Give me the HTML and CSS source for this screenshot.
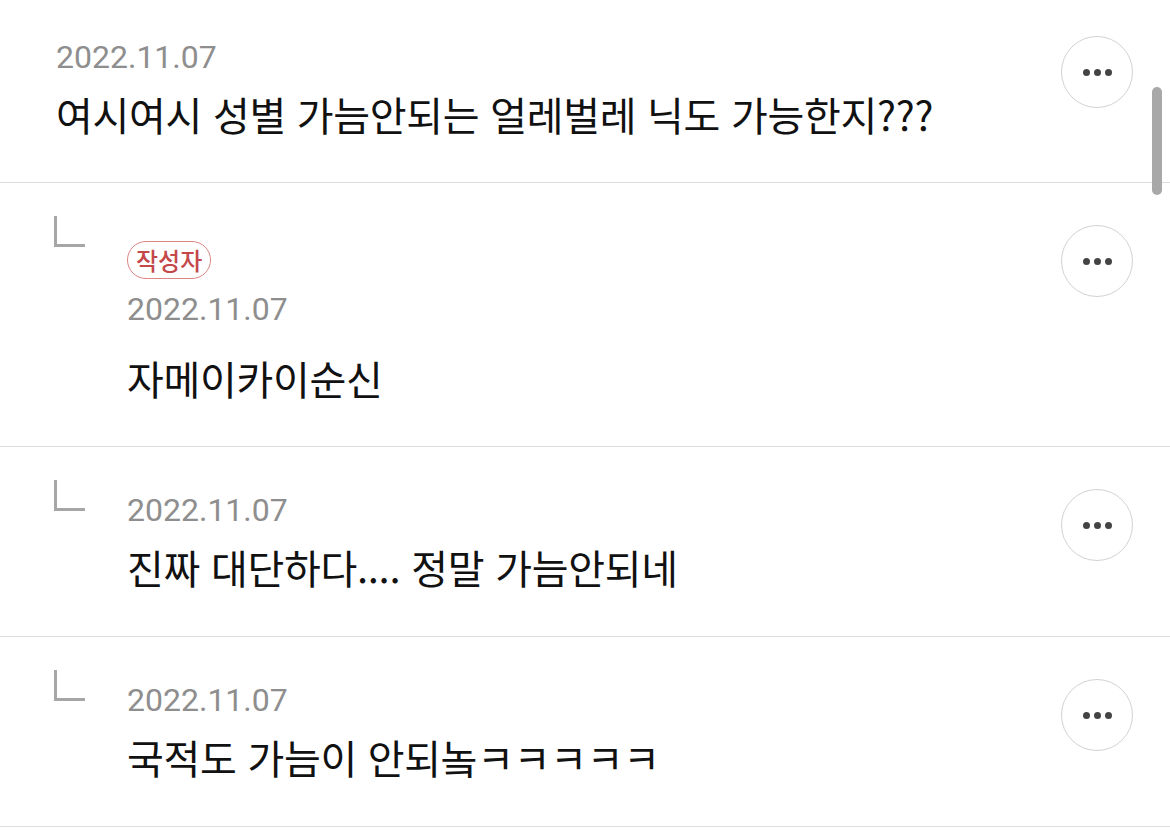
FILE: index.html
```html
<!DOCTYPE html>
<html lang="ko">
<head>
<meta charset="utf-8">
<link rel="stylesheet" href="styles.css">
</head>
<body>
<div class="list">
  <div class="comment">
    <div class="body">
      <div class="date">2022.11.07</div>
      <div class="text">여시여시 성별 가늠안되는 얼레벌레 닉도 가능한지???</div>
    </div>
    <button class="more first"><span></span><span></span><span></span></button>
  </div>

  <div class="comment reply tall">
    <div class="corner"></div>
    <div class="body">
      <span class="badge">작성자</span>
      <div class="date">2022.11.07</div>
      <div class="text">자메이카이순신</div>
    </div>
    <button class="more"><span></span><span></span><span></span></button>
  </div>

  <div class="comment reply">
    <div class="corner"></div>
    <div class="body">
      <div class="date">2022.11.07</div>
      <div class="text">진짜 대단하다.... 정말 가늠안되네</div>
    </div>
    <button class="more"><span></span><span></span><span></span></button>
  </div>

  <div class="comment reply">
    <div class="corner"></div>
    <div class="body">
      <div class="date">2022.11.07</div>
      <div class="text">국적도 가늠이 안되놐ㅋㅋㅋㅋㅋ</div>
    </div>
    <button class="more"><span></span><span></span><span></span></button>
  </div>
</div>
<div class="scrollbar"></div>
</body>
</html>
```

FILE: styles.css
```css
* { box-sizing: border-box; }
html, body { margin: 0; padding: 0; background: #ffffff; }
body {
  width: 1170px;
  height: 840px;
  overflow: hidden;
  font-family: "Noto Sans CJK KR", "Noto Sans", sans-serif;
  color: #111111;
}
.list { display: flex; flex-direction: column; }
.comment {
  display: flex;
  align-items: flex-start;
  border-bottom: 1px solid #dedede;
  padding: 0 37px 0 56px;
  height: 183px;
}
.comment.reply { height: 190px; padding-left: 54px; }
.comment.reply.tall { height: 264px; }
.body { flex: 1; display: flex; flex-direction: column; align-items: flex-start; }
.comment:first-child .body { padding-top: 37px; }
.reply .body { padding-top: 43px; }
.reply.tall .body { padding-top: 58px; }
.date {
  font-family: Roboto, "Liberation Sans", sans-serif;
  font-size: 32px;
  line-height: 40px;
  color: #8e8e8e;
}
.text {
  font-size: 40px;
  line-height: 48px;
  margin-top: 13px;
  color: #111111;
  letter-spacing: -0.3px;
}
.reply.tall .text { margin-top: 25px; }
.corner {
  width: 31px;
  height: 31px;
  margin-top: 33px;
  margin-right: 42px;
  border-left: 3px solid #a6a6a6;
  border-bottom: 3px solid #a6a6a6;
  flex: none;
}
.badge {
  display: inline-flex;
  align-items: center;
  justify-content: center;
  height: 38px;
  padding: 0 8px 1px;
  border: 1.5px solid #dc8582;
  border-radius: 19px;
  color: #c4474a;
  font-size: 24px;
  font-weight: 500;
  line-height: 1;
  margin-bottom: 10px;
}
.more {
  flex: none;
  width: 72px;
  height: 72px;
  border-radius: 50%;
  border: 1.5px solid #d2d2d2;
  background: #ffffff;
  display: flex;
  align-items: center;
  justify-content: center;
  gap: 4px;
  padding: 0;
  margin-top: 42px;
}
.more.first { margin-top: 36px; }
.more span {
  width: 7px;
  height: 7px;
  border-radius: 50%;
  background: #444444;
}
.scrollbar {
  position: absolute;
  left: 1152px;
  top: 87px;
  width: 10px;
  height: 108px;
  border-radius: 5px;
  background: #a8a8a8;
}
```
